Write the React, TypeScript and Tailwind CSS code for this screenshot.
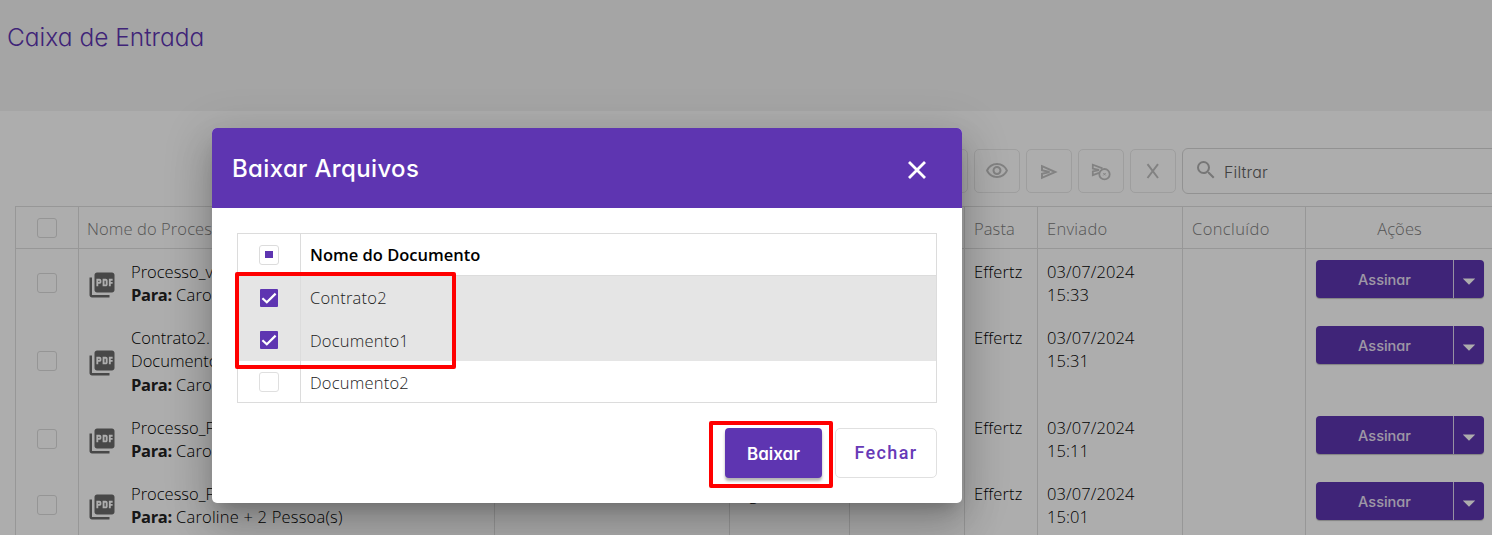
import type { ReactNode } from "react";
import { MdPictureAsPdf, MdOutlineVisibility, MdSearch, MdArrowDropDown } from "react-icons/md";

const COLS = "grid grid-cols-[63px_416px_235px_120px_115px_73px_145px_123px_187px]";

type Row = { lines: string[]; to: string; time: string; height: string };

const rows: Row[] = [
  { lines: ["Processo_v"], to: "Caroline", time: "15:33", height: "h-[66px]" },
  { lines: ["Contrato2.", "Documento1"], to: "Caroline", time: "15:31", height: "h-[90px]" },
  { lines: ["Processo_F"], to: "Caroline", time: "15:11", height: "h-[66px]" },
  { lines: ["Processo_F"], to: "Caroline + 2 Pessoa(s)", time: "15:01", height: "h-[66px]" },
];

const CELL = "border-r border-[#dfdfdf]";

function EmptyBox() {
  return <span className="block h-5 w-5 rounded-[3px] border border-[#dcdcdc]" />;
}

function ToolButton({ children }: { children?: ReactNode }) {
  return (
    <div className="flex h-11 w-[46px] shrink-0 items-center justify-center rounded-[5px] border border-[#e9e9e9] text-[#c0c0c0]">
      {children}
    </div>
  );
}

function SendIcon() {
  return (
    <svg width="18" height="16" viewBox="0 0 18 16" fill="none" stroke="currentColor" strokeWidth="2" className="mt-0.5">
      <path d="M2 2.2 15.2 8 2 13.8V9.8L9.5 8 2 6.2Z" />
    </svg>
  );
}

function ScheduleIcon() {
  return (
    <svg width="20" height="18" viewBox="0 0 20 18" fill="none" stroke="currentColor" strokeWidth="1.8" className="mt-0.5">
      <path d="M11.5 5.4 1.8 1.7V5.6L8 7 1.8 8.4V12.2L8 9.9" />
      <circle cx="13.5" cy="11.2" r="5.2" />
      <path d="M12.3 10 14.7 12.4M14.7 10 12.3 12.4" strokeWidth="1" />
    </svg>
  );
}

function Check({ checked }: { checked: boolean }) {
  if (!checked) return <span className="block h-5 w-5 rounded-[3px] border border-[#dfdfdf] bg-white" />;
  return (
    <span className="flex h-[18px] w-[18px] items-center justify-center rounded-[1px] bg-[#5e35b1]">
      <svg width="18" height="18" viewBox="0 0 18 18" fill="none" stroke="white" strokeWidth="2.2">
        <path d="M2.4 9.2 6.8 13.2 15.6 4.6" />
      </svg>
    </span>
  );
}

function DataRow({ row }: { row: Row }) {
  return (
    <div className={`${COLS} ${row.height} text-[16.5px] leading-[23.6px] text-black`}>
      <div className={`${CELL} flex items-center justify-center pt-[2px]`}><EmptyBox /></div>
      <div className={`${CELL} flex items-center gap-3.5 overflow-hidden whitespace-nowrap pl-2`}>
        <MdPictureAsPdf className="mt-1.5 size-[30px] shrink-0 text-[#6b6b6b]" />
        <div className="self-start pt-[10.5px]">
          {row.lines.map((l) => <div key={l}>{l}</div>)}
          <div><b className="font-bold tracking-[-0.35px] text-[#222222]">Para:</b> <span className="tracking-[0.2px]">{row.to}</span></div>
        </div>
      </div>
      <div className={CELL} />
      <div className={`${CELL} pl-[9px] pt-[10.5px]`}>Aguardando</div>
      <div className={CELL} />
      <div className={`${CELL} pl-[9px] pt-[10.5px] tracking-[0.1px]`}>Effertz</div>
      <div className={`${CELL} pl-[9px] pt-[10.5px] tracking-[0.1px]`}>03/07/2024<br />{row.time}</div>
      <div className={CELL} />
      <div className="pl-[10px] pt-[11px]">
        <div className="flex h-[38px] w-[168px] overflow-hidden rounded-[4px] bg-[#5e35b1] text-white shadow-[0_1px_1px_rgba(0,0,0,0.25)]">
          <div className="flex w-[138px] items-center justify-center border-r border-white/80 pt-0.5 font-[Inter] text-[14.5px] font-medium leading-none text-[#e9e1f5] [font-feature-settings:'cv11']">Assinar</div>
          <div className="flex flex-1 items-center justify-center pt-1"><MdArrowDropDown className="size-[30px] shrink-0" /></div>
        </div>
      </div>
    </div>
  );
}

export default function App() {
  return (
    <div className="relative h-[535px] w-[1492px] overflow-hidden bg-white font-['Open_Sans','Noto_Sans',sans-serif] font-light">
      <header className="h-[111px] bg-[#f4f4f4] pl-[7px] pt-[21px] font-[Inter] text-[24.5px] font-[330] leading-8 text-[#5e35b1] [font-feature-settings:'cv11']">
        Caixa de Entrada
      </header>
      <div className="flex h-[95px] items-start gap-1.5 pl-[922px] pt-[38px]">
        <ToolButton />
        <ToolButton><MdOutlineVisibility className="size-6" /></ToolButton>
        <ToolButton><SendIcon /></ToolButton>
        <ToolButton><ScheduleIcon /></ToolButton>
        <ToolButton>
          <svg width="14" height="16" viewBox="0 0 14 16" fill="none" stroke="currentColor" strokeWidth="2"><path d="M1.5 1.2 12 15M12 1.2 1.5 15" /></svg>
        </ToolButton>
        <div className="-mt-px flex h-[46px] w-[330px] shrink-0 items-center rounded-md border border-[#d8d8d8] pl-[11px] font-[Inter] text-[16px] [font-feature-settings:'cv11']">
          <MdSearch className="mb-0.5 size-6 text-[#b0b0b0]" />
          <span className="pl-1.5 pt-0.5 tracking-[0.15px] text-[#616161]">Filtrar</span>
        </div>
      </div>
      <div className="ml-[15px] w-[1478px] border-l border-t border-[#dfdfdf]">
        <div className={`${COLS} h-[42px] border-b border-[#dfdfdf] text-[16.5px] leading-[43px] tracking-[0.1px] text-[#808080]`}>
          <div className={`${CELL} flex items-center justify-center pb-px`}><EmptyBox /></div>
          <div className={`${CELL} pl-2`}>Nome do Processo</div>
          <div className={CELL} />
          <div className={CELL} />
          <div className={CELL} />
          <div className={`${CELL} pl-[9px]`}>Pasta</div>
          <div className={`${CELL} pl-[9px] tracking-[0.3px]`}>Enviado</div>
          <div className={`${CELL} pl-[9px] tracking-[0.4px]`}>Concluído</div>
          <div className="text-center">Ações</div>
        </div>
        {rows.map((r) => <DataRow key={r.time} row={r} />)}
      </div>

      <div className="absolute inset-0 bg-black/32 pl-[212px] pt-[128px]">
        <section className="h-[375px] w-[750px] overflow-hidden rounded-[5px] bg-white shadow-[0_11px_15px_-7px_rgba(0,0,0,0.2),0_24px_38px_3px_rgba(0,0,0,0.14),0_9px_46px_8px_rgba(0,0,0,0.12)]">
          <div className="flex h-20 items-center justify-between bg-[#5e35b1] pl-5 pr-9 pt-0.5 font-[Inter] text-[24px] font-medium tracking-[0.35px] text-white [font-feature-settings:'cv11']">
            <h2>Baixar Arquivos</h2>
            <svg width="18" height="18" viewBox="0 0 18 18" fill="none" stroke="white" strokeWidth="2.8" className="mt-0.5"><path d="M1 1 17 17M17 1 1 17" /></svg>
          </div>
          <div className="mx-[25px] mt-[25px] border border-[#dcdcdc] text-[16.5px] text-[#1c1c1c]">
            <div className="flex h-[42px] border-b border-[#dcdcdc] font-semibold text-black">
              <div className="flex w-[63px] items-center justify-center border-r border-[#dcdcdc]">
                <span className="flex h-5 w-5 items-center justify-center rounded-[3px] border border-[#dcdcdc]"><span className="h-[7px] w-2 bg-[#5e35b1]" /></span>
              </div>
              <div className="flex items-center pl-[9px] pt-px">Nome do Documento</div>
            </div>
            {["Contrato2", "Documento1", "Documento2"].map((name, i) => (
              <div key={name} className={i < 2 ? "flex h-[42.5px] bg-[#e5e5e5]" : "flex h-[41px]"}>
                <div className={i < 2 ? "flex w-[63px] items-center justify-center border-r border-[#dcdcdc] pt-px" : "flex w-[63px] items-center justify-center border-r border-[#dcdcdc]"}><Check checked={i < 2} /></div>
                <div className="flex items-center pl-[9px] pt-[3px] tracking-[0.2px]">{name}</div>
              </div>
            ))}
          </div>
          <div className="mr-[25px] mt-[25px] flex justify-end gap-[13px]">
            <button className="h-[50px] w-[97px] rounded-[4px] bg-[#5e35b1] pt-[3px] font-[Inter] text-[17px] font-[580] text-white shadow-[0_3px_3px_rgba(0,0,0,0.3)] [font-feature-settings:'cv11']">Baixar</button>
            <button className="h-[50px] w-[102px] rounded-[5px] border border-[#e0e0e0] pb-px font-[Roboto] text-[18px] font-medium tracking-[1.4px] text-[#673ab7]">Fechar</button>
          </div>
        </section>
      </div>

      <div className="absolute left-[235px] top-[272px] h-[97px] w-[221px] rounded-[2px] border-4 border-[#ff0000]" />
      <div className="absolute left-[709px] top-[421px] h-[67px] w-[124px] rounded-[2px] border-4 border-[#ff0000]" />
    </div>
  );
}
